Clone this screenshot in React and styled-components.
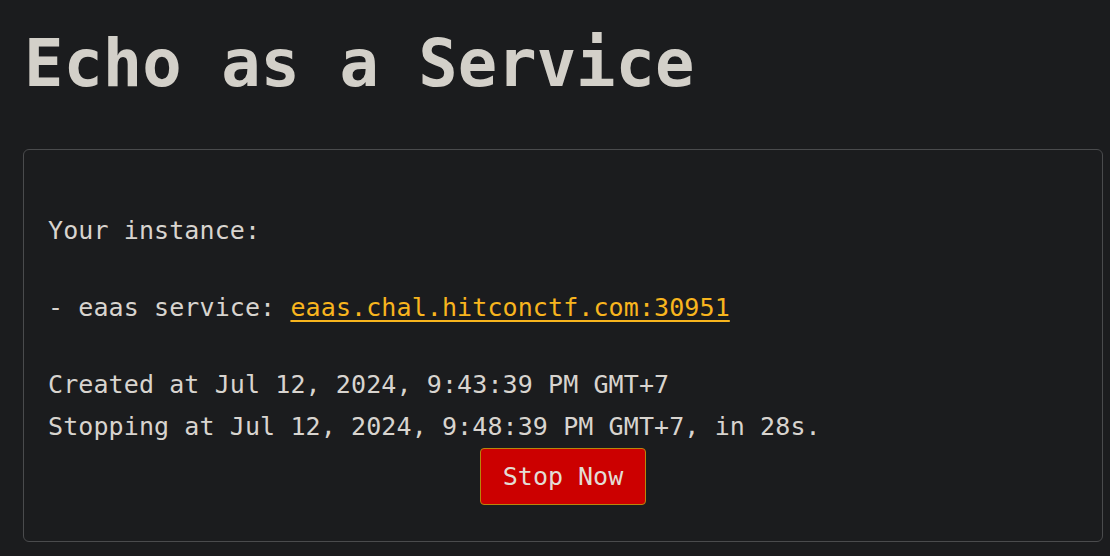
import React from 'react';
import styled, {createGlobalStyle} from 'styled-components';

const GlobalStyle = createGlobalStyle`
    html, body {
        margin: 0;
        padding: 0;
        background: #1b1c1e;
    }
    body {
        font-family: "DejaVu Sans Mono", "Liberation Mono", monospace;
        color: #d8d4cf;
    }
`;

const Page = styled.main`
    padding: 25px 7px 15px 23px;
`;

const Title = styled.h1`
    margin: 0 0 48px 1px;
    font-size: 65.5px;
    font-weight: bold;
    line-height: normal;
    color: #d3d0c9;
`;

const Card = styled.section`
    border: 1px solid #4a4b4d;
    border-radius: 6px;
    padding: 60px 24px 36px 24px;
    display: flex;
    flex-direction: column;
`;

const Line = styled.div`
    font-size: 25px;
    letter-spacing: 0.1px;
    line-height: 42px;
    white-space: pre;
    margin-top: ${props => props.gap || 0}px;
`;

const InstanceLink = styled.a`
    color: #f8b51e;
    text-decoration: underline;
    text-underline-offset: 4px;
`;

const StopButton = styled.button`
    align-self: center;
    font-family: inherit;
    font-size: 25px;
    line-height: 30px;
    padding: 13px 22px 12px;
    color: #e3dcd4;
    background: #cc0000;
    border: 1px solid #b8860b;
    border-radius: 4px;
    cursor: pointer;
`;

const App = () => {
    return (
        <Page>
            <GlobalStyle />
            <Title>Echo as a Service</Title>
            <Card>
                <Line>Your instance:</Line>
                <Line gap={35}>
                    - eaas service: <InstanceLink href="#">eaas.chal.hitconctf.com:30951</InstanceLink>
                </Line>
                <Line gap={35}>Created at Jul 12, 2024, 9:43:39 PM GMT+7</Line>
                <Line>Stopping at Jul 12, 2024, 9:48:39 PM GMT+7, in 28s.</Line>
                <StopButton>Stop Now</StopButton>
            </Card>
        </Page>
    );
};

export default App;
